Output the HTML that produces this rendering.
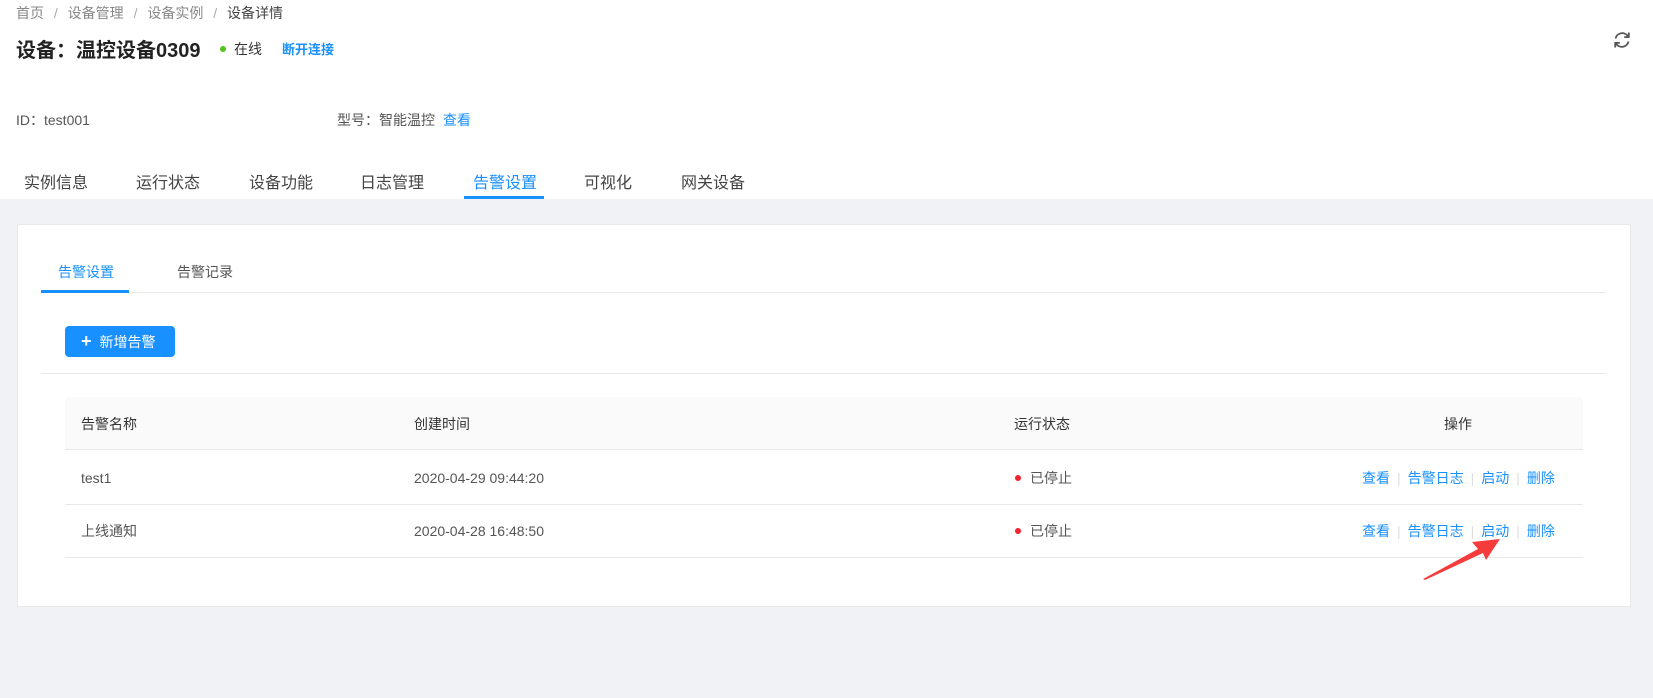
<!DOCTYPE html>
<html><head><meta charset="utf-8"><style>
*{margin:0;padding:0;box-sizing:border-box}
body{width:1653px;height:698px;overflow:hidden;background:#fff;font-family:"Liberation Sans","Noto Sans CJK SC",sans-serif;position:relative;color:#333}
.a{position:absolute;white-space:nowrap;line-height:22px}
.blue{color:#1890ff}
</style></head><body>
<div class="a" style="left:16px;top:2px;font-size:14px;color:#888">首页 <span style="margin:0 6px;color:#aaa">/</span> 设备管理 <span style="margin:0 6px;color:#aaa">/</span> 设备实例 <span style="margin:0 6px;color:#aaa">/</span> <span style="color:#444">设备详情</span></div>
<div class="a" style="left:16px;top:36px;font-size:20px;font-weight:bold;color:#222;line-height:26px">设备<span style="font-family:'Noto Sans CJK SC',sans-serif">：</span>温控设备0309</div>
<div class="a" style="left:220px;top:46px;width:6px;height:6px;border-radius:50%;background:#52c41a"></div>
<div class="a" style="left:234px;top:38px;font-size:14px;color:#333">在线</div>
<div class="a" style="left:282px;top:39px;font-size:13px;font-weight:bold" ><span class="blue">断开连接</span></div>
<svg class="a" style="left:1612px;top:30px" width="20" height="20" viewBox="0 0 20 20" fill="none" stroke="#555" stroke-width="1.8"><path d="M3.5 8.5A6.8 6.8 0 0 1 16 6.5"/><path d="M16.5 11.5A6.8 6.8 0 0 1 4 13.5"/><path d="M16.8 2.5v4.6h-4.6" stroke-linejoin="round"/><path d="M3.2 17.5v-4.6h4.6" stroke-linejoin="round"/></svg>
<div class="a" style="left:16px;top:109px;font-size:14px;color:#555">ID：test001</div>
<div class="a" style="left:337px;top:109px;font-size:14px;color:#555">型号：智能温控 <span class="blue" style="margin-left:4px">查看</span></div>
<div class="a" style="top:173px;left:24px;font-size:16px;color:#444">实例信息</div>
<div class="a" style="top:173px;left:136px;font-size:16px;color:#444">运行状态</div>
<div class="a" style="top:173px;left:249px;font-size:16px;color:#444">设备功能</div>
<div class="a" style="top:173px;left:360px;font-size:16px;color:#444">日志管理</div>
<div class="a" style="top:173px;left:473px;font-size:16px;color:#1890ff">告警设置</div>
<div class="a" style="top:173px;left:584px;font-size:16px;color:#444">可视化</div>
<div class="a" style="top:173px;left:681px;font-size:16px;color:#444">网关设备</div>
<div class="a" style="left:464px;top:196px;width:80px;height:3px;background:#1890ff"></div>
<div class="a" style="left:0;top:199px;width:1653px;height:499px;background:#f0f2f5"></div>
<div class="a" style="left:17px;top:224px;width:1614px;height:383px;background:#fff;border:1px solid #e8e8e8;border-radius:2px"></div>
<div class="a" style="left:58px;top:261px;font-size:14px;color:#1890ff">告警设置</div>
<div class="a" style="left:177px;top:261px;font-size:14px;color:#555">告警记录</div>
<div class="a" style="left:41px;top:292px;width:1565px;height:1px;background:#e8e8e8"></div>
<div class="a" style="left:41px;top:290px;width:88px;height:3px;background:#1890ff"></div>
<div class="a" style="left:65px;top:326px;width:110px;height:31px;background:#1890ff;border-radius:4px;color:#fff;font-size:14px;line-height:31px;padding-left:16px"><span style="font-size:18px;font-weight:bold;margin-right:8px">+</span>新增告警</div>
<div class="a" style="left:41px;top:373px;width:1565px;height:1px;background:#e8e8e8"></div>
<div class="a" style="left:65px;top:397px;width:1518px;height:53px;background:#fafafa;border-bottom:1px solid #e8e8e8;border-radius:4px 4px 0 0"></div>
<div class="a" style="left:65px;top:504px;width:1518px;height:1px;background:#e8e8e8"></div>
<div class="a" style="left:65px;top:557px;width:1518px;height:1px;background:#e8e8e8"></div>
<div class="a" style="left:81px;top:413px;font-size:14px;color:#333">告警名称</div>
<div class="a" style="left:414px;top:413px;font-size:14px;color:#333">创建时间</div>
<div class="a" style="left:1014px;top:413px;font-size:14px;color:#333">运行状态</div>
<div class="a" style="left:1444px;top:413px;font-size:14px;color:#333">操作</div>
<div class="a" style="left:81px;top:467px;font-size:14px;color:#555;height:22px;display:flex;align-items:center">test1</div>
<div class="a" style="left:414px;top:467px;font-size:14px;color:#555;height:22px;display:flex;align-items:center">2020-04-29 09:44:20</div>
<div class="a" style="left:81px;top:520px;font-size:14px;color:#555">上线通知</div>
<div class="a" style="left:414px;top:520px;font-size:14px;color:#555;height:22px;display:flex;align-items:center">2020-04-28 16:48:50</div>
<div class="a" style="left:1015px;top:475px;width:6px;height:6px;border-radius:50%;background:#f5222d"></div>
<div class="a" style="left:1030px;top:467px;font-size:14px;color:#555">已停止</div>
<div class="a" style="left:1015px;top:528px;width:6px;height:6px;border-radius:50%;background:#f5222d"></div>
<div class="a" style="left:1030px;top:520px;font-size:14px;color:#555">已停止</div>
<div class="a blue" style="left:1362px;top:467px;font-size:14px">查看<span style="color:#ddd;margin:0 7px">|</span>告警日志<span style="color:#ddd;margin:0 7px">|</span>启动<span style="color:#ddd;margin:0 7px">|</span>删除</div>
<div class="a blue" style="left:1362px;top:520px;font-size:14px">查看<span style="color:#ddd;margin:0 7px">|</span>告警日志<span style="color:#ddd;margin:0 7px">|</span>启动<span style="color:#ddd;margin:0 7px">|</span>删除</div>
<svg class="a" style="left:1420px;top:530px" width="90" height="55" viewBox="0 0 90 55"><path d="M3 49 L58 19 L52 12 L80 9 L66 30 L63 23 L5 50Z" fill="#f53b3b"/></svg>
</body></html>
